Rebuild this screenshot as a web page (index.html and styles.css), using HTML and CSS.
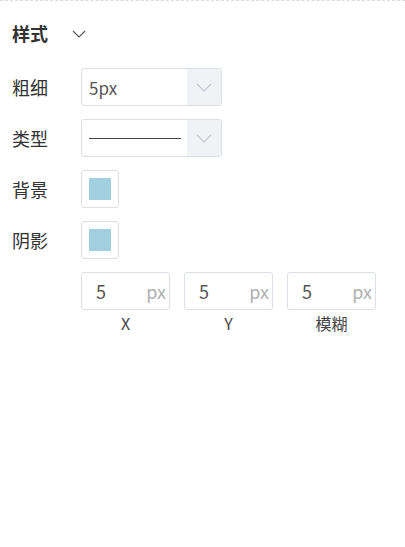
FILE: index.html
```html
<!DOCTYPE html>
<html lang="zh-CN">
<head>
    <meta charset="UTF-8">
    <meta name="viewport" content="width=device-width, initial-scale=1.0">
    <title>样式</title>
    <link rel="stylesheet" href="styles.css">
</head>
<body>
    <div class="panel">
        <div class="panel-head">
            <span class="panel-title">样式</span>
            <svg class="head-arrow" width="14" height="8" viewBox="0 0 14 8">
                <path d="M1 1 L7 7 L13 1" fill="none" stroke="#555" stroke-width="1.1"/>
            </svg>
        </div>

        <div class="row">
            <label class="row-label">粗细</label>
            <div class="select">
                <span class="select-value">5px</span>
                <span class="select-arrow">
                    <svg width="16" height="9" viewBox="0 0 16 9">
                        <path d="M1 1 L8 8 L15 1" fill="none" stroke="#c3c7cf" stroke-width="1.1"/>
                    </svg>
                </span>
            </div>
        </div>

        <div class="row">
            <label class="row-label">类型</label>
            <div class="select">
                <span class="select-value"><span class="line-solid"></span></span>
                <span class="select-arrow">
                    <svg width="16" height="9" viewBox="0 0 16 9">
                        <path d="M1 1 L8 8 L15 1" fill="none" stroke="#c3c7cf" stroke-width="1.1"/>
                    </svg>
                </span>
            </div>
        </div>

        <div class="row">
            <label class="row-label">背景</label>
            <div class="swatch"><span class="swatch-color"></span></div>
        </div>

        <div class="row">
            <label class="row-label">阴影</label>
            <div class="swatch"><span class="swatch-color"></span></div>
        </div>

        <div class="shadow-fields">
            <div class="field">
                <div class="num-input"><span class="num">5</span><span class="unit">px</span></div>
                <div class="field-label">X</div>
            </div>
            <div class="field">
                <div class="num-input"><span class="num">5</span><span class="unit">px</span></div>
                <div class="field-label">Y</div>
            </div>
            <div class="field">
                <div class="num-input"><span class="num">5</span><span class="unit">px</span></div>
                <div class="field-label">模糊</div>
            </div>
        </div>
    </div>
</body>
</html>
```

FILE: styles.css
```css
body {
    font-family: "Noto Sans CJK SC", "Noto Sans", sans-serif;
    background-color: #fff;
    color: #333;
    margin: 0;
}
.panel {
    border-top: 1px dashed #dcdcdc;
    padding: 19px 12px 0 12px;
}
.panel-head {
    display: flex;
    align-items: center;
    height: 26px;
    margin-bottom: 22px;
}
.panel-title {
    font-size: 18px;
    font-weight: bold;
    color: #333;
}
.head-arrow {
    margin-left: 24px;
    margin-top: 2px;
}
.row {
    display: flex;
    align-items: center;
    margin-bottom: 13px;
}
.row-label {
    width: 69px;
    font-size: 18px;
    color: #333;
}
.select {
    display: flex;
    width: 141px;
    height: 38px;
    box-sizing: border-box;
    border: 1px solid #dcdfe6;
    border-radius: 3px;
    overflow: hidden;
}
.select-value {
    flex: 1;
    display: flex;
    align-items: center;
    padding-left: 7px;
    font-size: 17px;
    color: #555;
}
.line-solid {
    display: block;
    width: 92px;
    border-top: 1px solid #444;
    margin-top: 1px;
}
.select-arrow {
    width: 34px;
    display: flex;
    align-items: center;
    justify-content: center;
    background-color: #f0f2f6;
}
.swatch {
    width: 38px;
    height: 38px;
    box-sizing: border-box;
    border: 1px solid #dcdfe6;
    border-radius: 3px;
    display: flex;
    align-items: center;
    justify-content: center;
}
.swatch-color {
    width: 22px;
    height: 22px;
    background-color: #a3d0e1;
}
.shadow-fields {
    display: flex;
    gap: 14px;
    margin-left: 69px;
    margin-top: 1px;
}
.field {
    width: 89px;
}
.num-input {
    display: flex;
    align-items: center;
    height: 38px;
    box-sizing: border-box;
    border: 1px solid #dcdfe6;
    border-radius: 3px;
    padding: 0 3px 0 14px;
    font-size: 18px;
}
.num {
    flex: 1;
    color: #555;
}
.unit {
    color: #b0b0b0;
}
.field-label {
    text-align: center;
    font-size: 16px;
    color: #444;
    margin-top: 1px;
}
```
